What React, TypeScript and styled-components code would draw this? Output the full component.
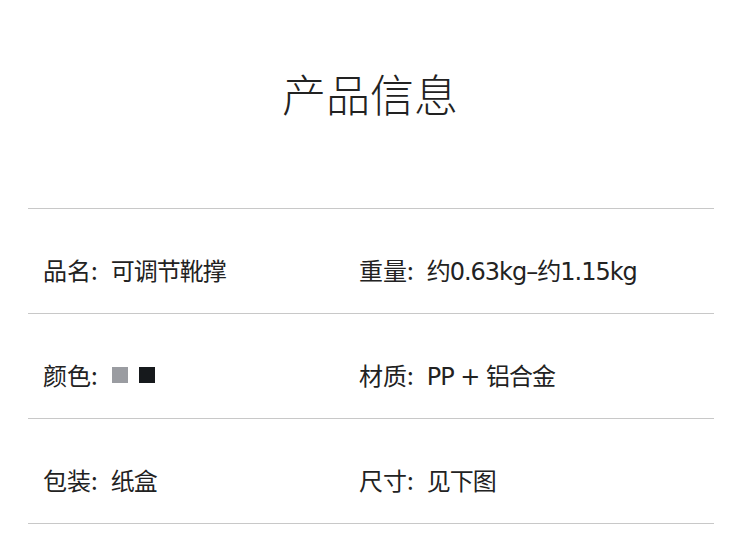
import styled, { createGlobalStyle } from 'styled-components';

const GlobalStyle = createGlobalStyle`
  body {
    margin: 0;
    background: #fff;
    font-family: "Noto Sans CJK SC", "Noto Sans", sans-serif;
  }
`;

type Spec = { label: string; value?: string; swatches?: string[] };

const specs: Spec[][] = [
  [
    { label: '品名', value: '可调节靴撑' },
    { label: '重量', value: '约0.63kg–约1.15kg' },
  ],
  [
    { label: '颜色', swatches: ['#9a9ca1', '#16191c'] },
    { label: '材质', value: 'PP + 铝合金' },
  ],
  [
    { label: '包装', value: '纸盒' },
    { label: '尺寸', value: '见下图' },
  ],
];

export default function App() {
  return (
    <Page>
      <GlobalStyle />
      <Header>
        <Title>产品信息</Title>
      </Header>
      <Table>
        {specs.map((row, i) => (
          <Row key={i}>
            {row.map((cell) => (
              <Cell key={cell.label}>
                <Label>{cell.label}:</Label>
                {cell.value && <Value>{cell.value}</Value>}
                {cell.swatches && (
                  <Swatches>
                    {cell.swatches.map((c) => (
                      <Swatch key={c} $color={c} />
                    ))}
                  </Swatches>
                )}
              </Cell>
            ))}
          </Row>
        ))}
      </Table>
    </Page>
  );
}

const Page = styled.div`
  width: 750px;
  height: 540px;
  overflow: hidden;
`;

const Header = styled.div`
  height: 208px;
  box-sizing: border-box;
  padding: 68px 10px 0 0;
  display: flex;
  justify-content: center;
`;

const Title = styled.h1`
  margin: 0;
  font-size: 44px;
  line-height: 50px;
  font-weight: 200;
  color: #222;
`;

const Table = styled.div`
  margin-left: 28px;
  width: 686px;
  border-bottom: 1px solid #c8c8c8;
`;

const Row = styled.div`
  display: grid;
  grid-template-columns: 316px 1fr;
  align-items: start;
  height: 105px;
  box-sizing: border-box;
  border-top: 1px solid #c8c8c8;
  padding: 46px 0 0 15px;
`;

const Cell = styled.div`
  display: flex;
  align-items: baseline;
  white-space: pre;
  font-size: 24px;
  line-height: 30px;
  color: #222;
`;

const Label = styled.span``;

const Value = styled.span`
  margin-left: 13px;
  font-family: "DejaVu Sans", "Noto Sans CJK SC", sans-serif;
  letter-spacing: -1px;
`;

const Swatches = styled.span`
  display: flex;
  gap: 11px;
  margin-left: 14px;
  align-self: center;
`;

const Swatch = styled.span<{ $color: string }>`
  width: 16px;
  height: 16px;
  background: ${(p) => p.$color};
`;
